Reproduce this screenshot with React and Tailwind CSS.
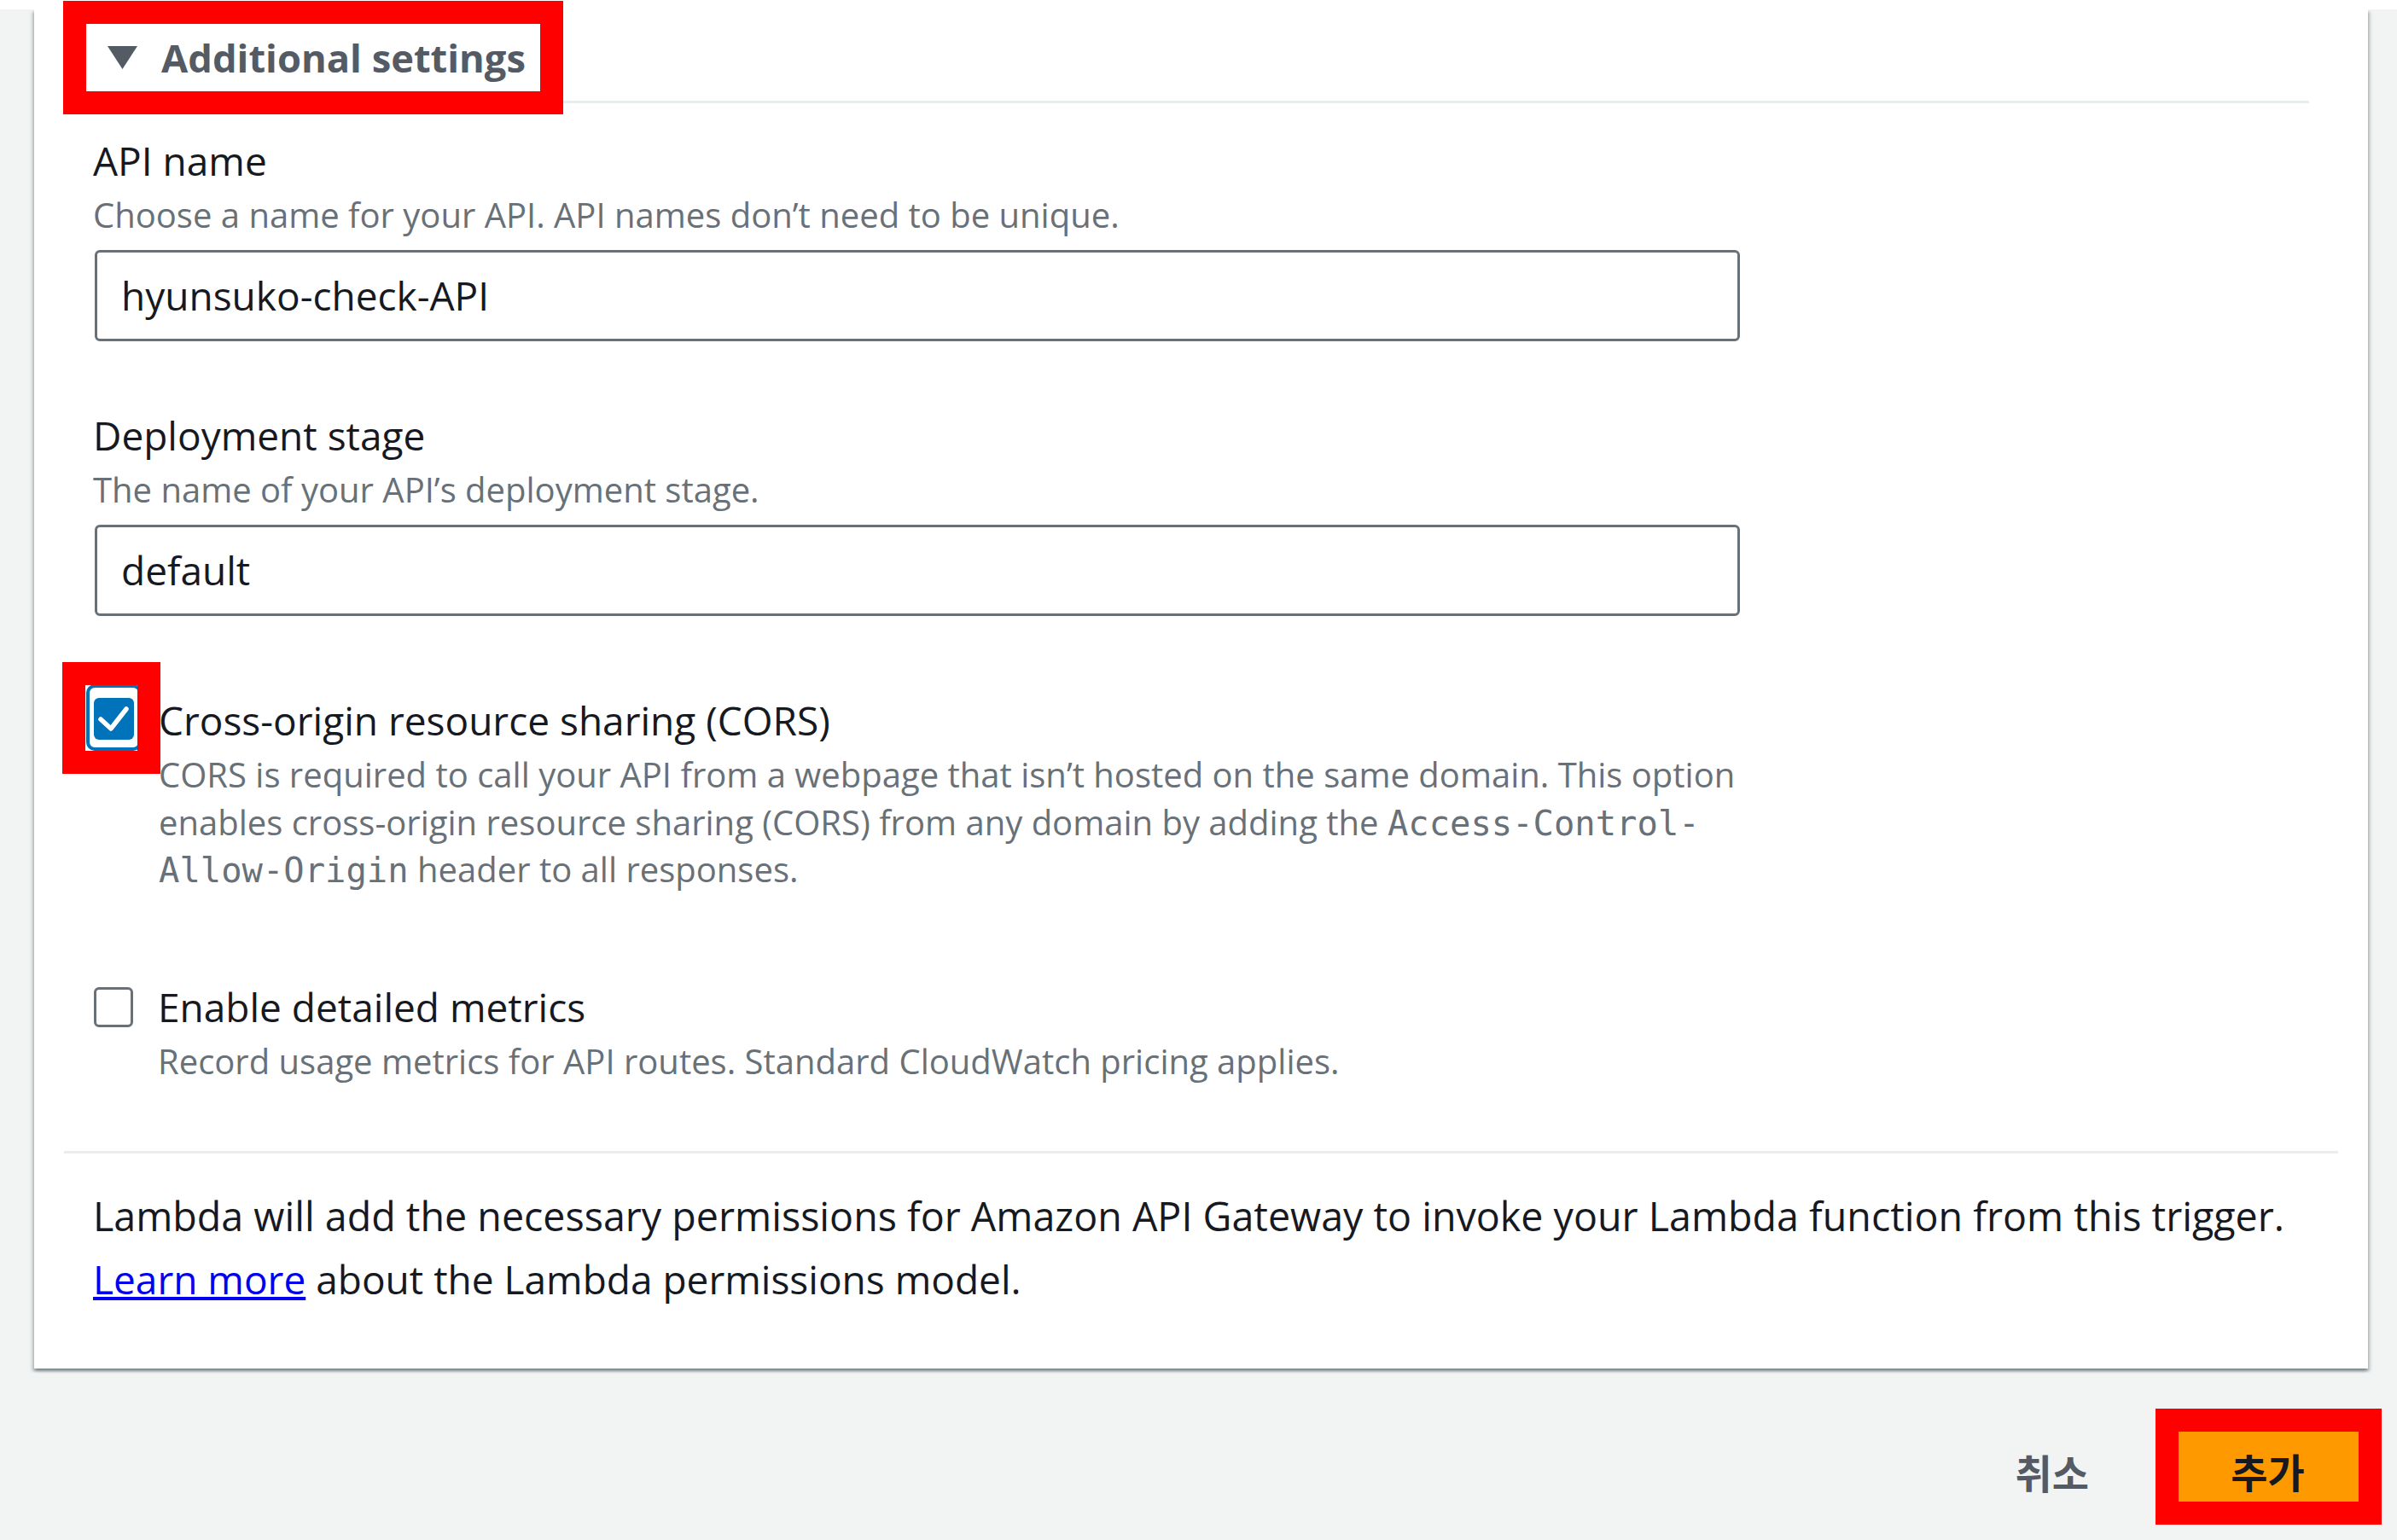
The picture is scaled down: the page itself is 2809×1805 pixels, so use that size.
import React from 'react';

/**
 * Lambda "Add trigger" form – API Gateway additional settings,
 * with the red annotation boxes that sit over the screenshot.
 */

function Checkbox({ checked = false, focused = false }) {
  if (!checked) {
    return (
      <span className="block h-[47px] w-[46px] shrink-0 rounded-[6px] border-[3px] border-[#687078] bg-white" />
    );
  }

  return (
    <span className="relative block h-[49px] w-[47px] shrink-0 rounded-[6px] bg-[#0073bb]">
      {/* Focus ring */}
      {focused && (
        <span className="absolute -bottom-[13px] -left-[9px] -right-[9px] -top-[16px] rounded-[10px] border-[4px] border-[#0073bb]" />
      )}
      <svg className="absolute inset-0" width="47" height="49" viewBox="0 0 47 49" aria-hidden="true">
        <path
          d="M8 25 L20 36 L38 13"
          fill="none"
          stroke="#ffffff"
          strokeWidth="5.5"
          strokeLinecap="round"
          strokeLinejoin="round"
        />
      </svg>
    </span>
  );
}

function TextField({ label, description, value }) {
  return (
    <div>
      <div className="text-[46px] leading-[60px] text-[#16191f]">{label}</div>
      <div className="mt-[6px] whitespace-nowrap text-[40px] leading-[56px] text-[#687078]">{description}</div>
      <div className="ml-[2px] mt-[13px] flex h-[107px] w-[1928px] items-center rounded-[6px] border-[3px] border-[#687078] bg-white pl-[28px] text-[46px] text-[#16191f]">
        {value}
      </div>
    </div>
  );
}

function Annotation({ className }) {
  return <div className={`pointer-events-none absolute border-[27px] border-[#ff0000] ${className}`} />;
}

export default function App() {
  return (
    <div className="relative h-[1805px] w-[2809px] overflow-hidden bg-[#f2f3f3] font-['Open_Sans','Noto_Sans_CJK_KR',sans-serif] text-[#16191f]">
      <div className="h-[11px] bg-white" />

      {/* Card */}
      <div className="pl-[40px] pr-[34px]">
        <div className="h-[1593px] bg-white px-[35px] shadow-[0_3px_3px_0_rgba(0,28,36,0.3),3px_3px_3px_0_rgba(0,28,36,0.15),-3px_3px_3px_0_rgba(0,28,36,0.15)]">
          <div className="px-[34px] pb-[77px]">
            {/* Expandable section header */}
            <div className="flex h-[110px] items-center gap-[28px] border-b-[3px] border-[#eaeded] pl-[17px] pt-[6px]">
              <svg width="35" height="27" viewBox="0 0 35 27" aria-hidden="true">
                <path d="M0 0 H35 L17.5 27 Z" fill="#545b64" />
              </svg>
              <h2 className="text-[45.3px] font-bold leading-none text-[#545b64]">Additional settings</h2>
            </div>

            <div className="pt-[37px]">
              <TextField
                label="API name"
                description="Choose a name for your API. API names don’t need to be unique."
                value="hyunsuko-check-API"
              />
              <div className="mt-[80px]">
                <TextField
                  label="Deployment stage"
                  description="The name of your API’s deployment stage."
                  value="default"
                />
              </div>

              {/* CORS */}
              <div className="ml-[1px] mt-[92px] flex gap-[29px]">
                <div className="mt-[4px]">
                  <Checkbox checked focused />
                </div>
                <div>
                  <div className="text-[46px] leading-[60px]">Cross-origin resource sharing (CORS)</div>
                  <div className="mt-[6px] whitespace-nowrap text-[40px] leading-[55.5px] text-[#687078]">
                    CORS is required to call your API from a webpage that isn’t hosted on the same domain. This option
                    <br />
                    enables cross-origin resource sharing (CORS) from any domain by adding the{' '}
                    <span className="font-['DejaVu_Sans_Mono',monospace] text-[40.5px] leading-none">Access-Control-</span>
                    <br />
                    <span className="font-['DejaVu_Sans_Mono',monospace] text-[40.5px] leading-none">Allow-Origin</span>{' '}
                    header to all responses.
                  </div>
                </div>
              </div>

              {/* Detailed metrics */}
              <div className="ml-[1px] mt-[103px] flex gap-[29px]">
                <div className="mt-[7px]">
                  <Checkbox />
                </div>
                <div>
                  <div className="text-[46px] leading-[60px]">Enable detailed metrics</div>
                  <div className="mt-[6px] whitespace-nowrap text-[40px] leading-[56px] text-[#687078]">
                    Record usage metrics for API routes. Standard CloudWatch pricing applies.
                  </div>
                </div>
              </div>
            </div>
          </div>

          <div className="border-t-[3px] border-[#eaeded]" />

          {/* Permissions note */}
          <div className="whitespace-nowrap px-[34px] pt-[36px] text-[46px] leading-[74px]">
            <span className="text-[46.6px]">
              Lambda will add the necessary permissions for Amazon API Gateway to invoke your Lambda function from this
              trigger.
            </span>
            <br />
            <a href="#" className="text-[#0000ee] underline">
              Learn more
            </a>{' '}
            about the Lambda permissions model.
          </div>
        </div>
      </div>

      {/* Footer actions */}
      <div className="flex items-center justify-end gap-[92px] pr-[34px] pt-[61px]">
        <button type="button" className="pt-[14px] text-[47px] font-bold text-[#545b64]">
          취소
        </button>
        <button type="button" className="h-[110px] w-[235px] bg-[#ff9900] pt-[12px] text-[47px] font-bold text-[#16191f]">
          추가
        </button>
      </div>

      {/* Red annotation boxes */}
      <Annotation className="left-[74px] top-[1px] h-[133px] w-[586px]" />
      <Annotation className="left-[73px] top-[776px] h-[131px] w-[115px]" />
      <Annotation className="left-[2526px] top-[1651px] h-[136px] w-[265px]" />
    </div>
  );
}
